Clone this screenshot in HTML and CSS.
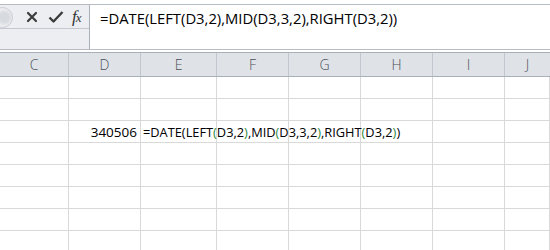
FILE: index.html
```html
<!DOCTYPE html>
<html>
<head>
<meta charset="utf-8">
<link rel="stylesheet" href="styles.css">
</head>
<body>
<div class="topgap"></div>
<div class="fbar">
  <div class="fleft">
    <div class="ftools">
      <span class="knob"></span>
      <svg class="ico x" width="12" height="12" viewBox="0 0 12 12"><path d="M2 2 L10 10 M10 2 L2 10" stroke="#3c3c3c" stroke-width="2.2" stroke-linecap="round"/></svg>
      <svg class="ico ok" width="16" height="14" viewBox="0 0 16 14"><path d="M1.5 7.5 L5.5 11.5 L14.5 2" fill="none" stroke="#3c3c3c" stroke-width="2.4" stroke-linejoin="round"/></svg>
      <span class="fx">f<span class="fxx">x</span></span>
    </div>
    <div class="fbottom"></div>
  </div>
  <div class="finput">=DATE(LEFT(D3,2),MID(D3,3,2),RIGHT(D3,2))</div>
</div>
<div class="gap"></div>
<div class="grid header">
  <div class="hc">C</div><div class="hc">D</div><div class="hc">E</div><div class="hc">F</div><div class="hc">G</div><div class="hc">H</div><div class="hc">I</div><div class="hc last">J</div>
</div>
<div class="grid row"><div></div><div></div><div></div><div></div><div></div><div></div><div></div><div></div></div>
<div class="grid row"><div></div><div></div><div></div><div></div><div></div><div></div><div></div><div></div></div>
<div class="grid row">
  <div></div>
  <div class="num">340506</div>
  <div class="ovf"><span class="ftxt">=DATE(LEFT<span class="g">(</span>D3,2<span class="g">)</span>,MID<span class="g">(</span>D3,3,2<span class="g">)</span>,RIGHT<span class="g">(</span>D3,2<span class="g">)</span>)</span></div>
  <div></div><div></div><div></div><div></div><div></div>
</div>
<div class="grid row"><div></div><div></div><div></div><div></div><div></div><div></div><div></div><div></div></div>
<div class="grid row"><div></div><div></div><div></div><div></div><div></div><div></div><div></div><div></div></div>
<div class="grid row"><div></div><div></div><div></div><div></div><div></div><div></div><div></div><div></div></div>
<div class="grid row"><div></div><div></div><div></div><div></div><div></div><div></div><div></div><div></div></div>
<div class="grid row"><div></div><div></div><div></div><div></div><div></div><div></div><div></div><div></div></div>
</body>
</html>
```
FILE: styles.css
```css
html, body {
  margin: 0;
  padding: 0;
  background: #ffffff;
  overflow: hidden;
  width: 550px;
  height: 250px;
  font-family: "Open Sans", "Noto Sans", sans-serif;
}
.topgap {
  height: 4px;
}
.fbar {
  display: flex;
  height: 44px;
  border-top: 1px solid #b7bcc3;
  border-bottom: 1px solid #b7bcc3;
}
.fleft {
  width: 89px;
  background: #eceef1;
  border-right: 1px solid #a9afb8;
  display: flex;
  flex-direction: column;
}
.ftools {
  height: 23px;
  border-bottom: 1px solid #c4c9d0;
  display: flex;
  align-items: center;
  position: relative;
  overflow: hidden;
}
.knob {
  position: absolute;
  left: -8px;
  top: 2px;
  width: 19px;
  height: 19px;
  border-radius: 50%;
  border: 1px solid #c8ccd2;
  background: radial-gradient(circle at 60% 50%, #d7dade 0 30%, #f4f5f7 70%);
}
.ico.x {
  margin-left: 26px;
}
.ico.ok {
  margin-left: 10px;
}
.fx {
  margin-left: 8px;
  font-family: "Liberation Serif", serif;
  font-style: italic;
  font-size: 17px;
  color: #333;
  letter-spacing: -1px;
}
.fxx {
  font-size: 13px;
}
.fbottom {
  flex: 1;
}
.finput {
  flex: 1;
  background: #fff;
  padding-left: 10px;
  padding-top: 3px;
  font-size: 14.8px;
  color: #000;
  white-space: nowrap;
  overflow: hidden;
}
.gap {
  height: 2px;
}
.grid {
  display: grid;
  grid-template-columns: 69px 72px 76px 72px 72px 72px 72px 1fr;
}
.header {
  height: 23px;
  border-top: 1px solid #a9b0ba;
  border-bottom: 1px solid #a9b0ba;
  background: #dfe3e8;
}
.hc {
  border-right: 1px solid #c2c7cf;
  text-align: center;
  font-size: 14px;
  font-weight: 300;
  line-height: 23px;
  color: #4a4f57;
}
.hc.last {
  border-right: none;
}
.row {
  height: 21px;
  border-bottom: 1px solid #d9d9d9;
}
.row > div {
  border-right: 1px solid #d9d9d9;
  position: relative;
}
.num {
  text-align: right;
  padding-right: 3px;
  font-size: 13.5px;
  line-height: 22px;
  color: #000;
}
.ovf {
  overflow: visible;
}
.ftxt {
  position: absolute;
  left: 2px;
  top: 0;
  line-height: 22px;
  font-size: 12.8px;
  white-space: nowrap;
  color: #000;
  z-index: 2;
}
.g {
  color: #2f8a3c;
}
```
